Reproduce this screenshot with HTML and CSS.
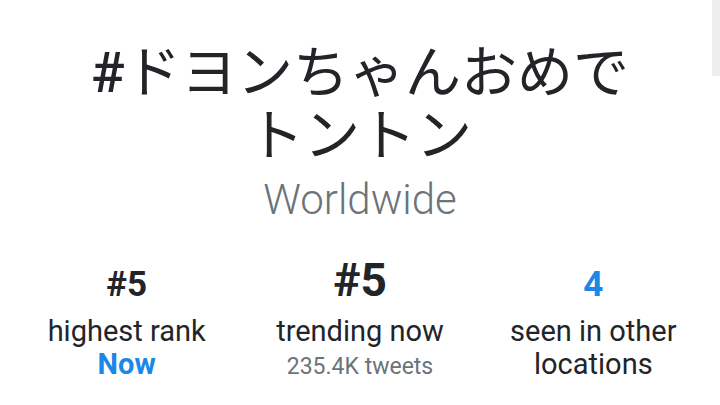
FILE: index.html
```html
<!DOCTYPE html>
<html lang="ja">
<head>
<meta charset="utf-8">
<title>Trend</title>
<link rel="stylesheet" href="styles.css">
</head>
<body>
<div class="page">
  <div class="scroll-thumb"></div>
  <header class="header">
    <h1 class="title"><span class="hash">#</span>ドヨンちゃんおめでトントン</h1>
    <div class="place">Worldwide</div>
  </header>
  <section class="stats">
    <div class="stat">
      <div class="value"><span class="num small">#5</span></div>
      <div class="label">highest rank</div>
      <div class="accent">Now</div>
    </div>
    <div class="stat">
      <div class="value"><span class="num big">#5</span></div>
      <div class="label">trending now</div>
      <div class="sub">235.4K tweets</div>
    </div>
    <div class="stat">
      <div class="value"><span class="num small blue">4</span></div>
      <div class="label">seen in other locations</div>
    </div>
  </section>
</div>
</body>
</html>
```
FILE: styles.css
```css
html, body {
  margin: 0;
  padding: 0;
  background: #ffffff;
}
body {
  font-family: Roboto, "Noto Sans CJK JP", sans-serif;
  color: #222428;
  width: 720px;
  height: 405px;
  overflow: hidden;
}
.page {
  position: relative;
  height: 405px;
}
.scroll-thumb {
  position: absolute;
  top: 0;
  right: 0;
  width: 8px;
  height: 76px;
  background: #eeeeee;
}
.header {
  text-align: center;
  padding-top: 36px;
}
.title {
  margin: 0 auto;
  width: 580px;
  font-family: "Noto Sans CJK JP", sans-serif;
  font-size: 56px;
  font-weight: 400;
  line-height: 63px;
  color: #222428;
}
.hash {
  font-family: Roboto, sans-serif;
  font-weight: 500;
  line-height: 0;
}
.place {
  margin-top: 14px;
  font-size: 42px;
  font-weight: 300;
  line-height: 48px;
  color: #6b737b;
}
.stats {
  display: grid;
  grid-template-columns: repeat(3, 1fr);
  padding: 0 10px;
  margin-top: 34px;
}
.stat {
  display: flex;
  flex-direction: column;
  align-items: center;
  text-align: center;
}
.value {
  height: 44px;
  font-size: 46px;
  line-height: 44px;
  margin-bottom: 13px;
}
.num {
  font-weight: 700;
  color: #222428;
}
.num.small {
  font-size: 35px;
}
.num.big {
  font-size: 46px;
}
.num.blue {
  color: #1b87e6;
}
.label {
  font-size: 29px;
  line-height: 33px;
  color: #222428;
}
.accent {
  font-size: 29px;
  line-height: 33px;
  font-weight: 700;
  color: #1b87e6;
}
.sub {
  font-size: 23px;
  line-height: 38px;
  color: #6b737b;
}
```
